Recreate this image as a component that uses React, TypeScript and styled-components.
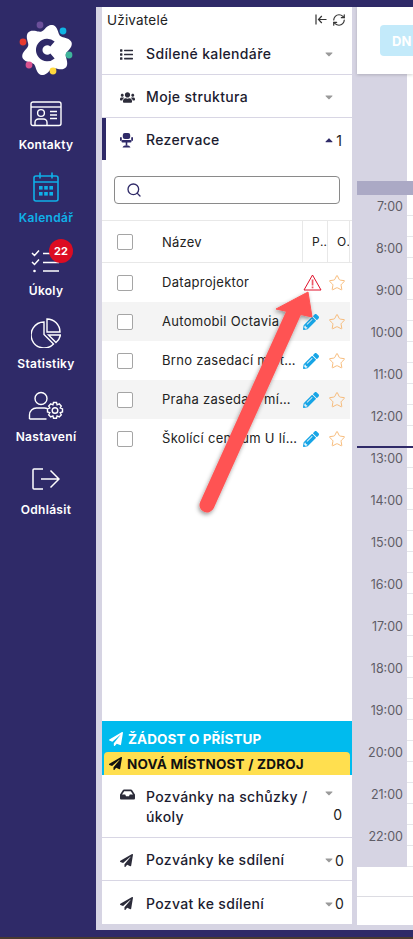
import React from "react";
import styled, { createGlobalStyle } from "styled-components";
import { FaList, FaUsers, FaPaperPlane, FaInbox, FaPencilAlt, FaCaretDown, FaCaretUp } from "react-icons/fa";
import { FiSearch } from "react-icons/fi";
import { RefreshCw, Star } from "lucide-react";

const Global = createGlobalStyle`
  html, body { margin: 0; padding: 0; background: #2f2a68; }
  body { font-family: "Inter", "Liberation Sans", sans-serif; color: #1a1a2a; }
  * { box-sizing: border-box; }
`;

const Page = styled.div`
  position: relative;
  width: 413px;
  height: 939px;
  overflow: hidden;
  display: flex;
  flex-direction: column;
  background: #2f2a68;
`;
const Shell = styled.div`
  flex: 1;
  display: flex;
  min-height: 0;
`;
const Rail = styled.nav`
  width: 96px;
  display: flex;
  flex-direction: column;
  align-items: center;
  padding: 20px 4px 0 0;
`;
const LogoBox = styled.div`
  height: 71px;
`;
const RailItem = styled.div<{ $active?: boolean }>`
  position: relative;
  width: 100%;
  height: 73px;
  display: flex;
  flex-direction: column;
  align-items: center;
  color: ${(p) => (p.$active ? "#0fb0e8" : "#fff")};
  font-size: 12px;
  font-weight: 600;
  letter-spacing: 0.3px;
`;
const RailIcon = styled.div`
  height: 46px;
  display: flex;
  align-items: center;
  justify-content: center;
`;
const Badge = styled.span`
  position: absolute;
  top: 2px;
  left: 49px;
  width: 24px;
  height: 24px;
  border-radius: 50%;
  background: #dc0c22;
  color: #fff;
  font-size: 11px;
  font-weight: 700;
  letter-spacing: 0;
  display: flex;
  align-items: center;
  justify-content: center;
`;
const Workspace = styled.div`
  flex: 1;
  display: flex;
  gap: 5px;
  margin-top: 7px;
  padding: 0 0 6px 6px;
  background: #d6d4e3;
  min-width: 0;
`;
const Panel = styled.aside`
  width: 250px;
  background: #fff;
  display: flex;
  flex-direction: column;
`;
const PanelHead = styled.div`
  height: 25px;
  padding: 0 6px 0 5px;
  display: flex;
  align-items: center;
  justify-content: space-between;
  font-size: 13.5px;
  letter-spacing: 0.2px;
  color: #222;
`;
const HeadTools = styled.div`
  display: flex;
  align-items: center;
  gap: 5px;
  color: #333;
`;
const Section = styled.div<{ $active?: boolean; $tall?: boolean }>`
  height: ${(p) => (p.$tall ? "63px" : p.$active ? "42px" : "43px")};
  padding: ${(p) => (p.$tall ? "12px" : "2px")} 10px 0 ${(p) => (p.$active ? "14px" : "18px")};
  display: flex;
  align-items: ${(p) => (p.$tall ? "flex-start" : "center")};
  border-left: ${(p) => (p.$active ? "4px solid #2f2a68" : "none")};
  border-bottom: ${(p) => (p.$active ? "none" : "1px solid #d8d6e4")};
  font-size: 14px;
  font-weight: 500;
  color: #1c1c30;
  &:last-child { border-bottom: none; }
`;
const SectionIcon = styled.span<{ $tint?: string }>`
  width: 26px;
  flex: none;
  display: flex;
  align-items: center;
  color: ${(p) => p.$tint || "#2c2c3a"};
`;
const SectionLabel = styled.span`
  flex: 1;
  line-height: 20px;
  letter-spacing: 0.35px;
`;
const SectionEnd = styled.span<{ $stack?: boolean }>`
  width: 20px;
  height: ${(p) => (p.$stack ? "36px" : "auto")};
  display: flex;
  flex-direction: ${(p) => (p.$stack ? "column" : "row")};
  align-items: ${(p) => (p.$stack ? "stretch" : "center")};
  justify-content: space-between;
  font-size: 14px;
  font-weight: 400;
  color: #222;
`;
const Caret = styled.span<{ $dark?: boolean }>`
  display: flex;
  margin-left: 1px;
  color: ${(p) => (p.$dark ? "#2f2a68" : "#9a9a9a")};
  font-size: 12px;
`;
const Count = styled.span`
  text-align: right;
`;
const SearchWrap = styled.div`
  padding: 16px 12px 16px;
`;
const SearchBox = styled.div`
  height: 28px;
  border: 1px solid #8a8a8a;
  border-radius: 4px;
  padding-left: 11px;
  display: flex;
  align-items: center;
  color: #2f2a68;
`;
const Table = styled.div`
  width: 250px;
  border-top: 1px solid #e8e8e8;
`;
const HeadRow = styled.div`
  height: 42px;
  display: grid;
  grid-template-columns: 50px 151px 25px 22px;
  border-bottom: 1px solid #e8e8e8;
  font-size: 13px;
  letter-spacing: 0.2px;
  color: #222;
`;
const HeadCell = styled.div`
  display: flex;
  align-items: center;
  padding-left: 10px;
  border-right: 1px solid #e8e8e8;
  overflow: hidden;
  white-space: nowrap;
`;
const NarrowCell = styled(HeadCell)`
  padding-left: 9px;
  font-size: 12px;
  & > span { overflow: hidden; text-overflow: ellipsis; }
`;
const CheckCell = styled.div`
  display: flex;
  align-items: center;
  padding-left: 15px;
`;
const Check = styled.span`
  width: 16px;
  height: 16px;
  border: 1px solid #a5a5a5;
  border-radius: 2px;
  background: #fff;
`;
const BodyRow = styled.div<{ $alt?: boolean }>`
  height: 39px;
  width: 248px;
  display: grid;
  grid-template-columns: 50px 151px 25px 22px;
  background: ${(p) => (p.$alt ? "#f4f4f4" : "#fff")};
  font-size: 13px;
  color: #222;
`;
const NameCell = styled.div`
  display: flex;
  align-items: center;
  padding: 0 6px 1px 10px;
  min-width: 0;
  letter-spacing: 0.3px;
  & > span { overflow: hidden; text-overflow: ellipsis; white-space: nowrap; }
`;
const IconCell = styled.div<{ $tint: string }>`
  display: flex;
  align-items: center;
  color: ${(p) => p.$tint};
`;
const Grow = styled.div`
  flex: 1;
`;
const AccessBand = styled.div`
  height: 54px;
  background: #00bbee;
  padding: 0 2px;
  display: flex;
  flex-direction: column;
`;
const AccessTitle = styled.div`
  height: 31px;
  padding: 4px 0 0 5px;
  display: flex;
  align-items: center;
  gap: 5px;
  color: #fff;
  font-size: 13.5px;
  font-weight: 700;
  letter-spacing: 0.1px;
`;
const NewResource = styled.div`
  height: 23px;
  border-radius: 4px 4px 0 0;
  background: #ffdf4f;
  padding-left: 5px;
  display: flex;
  align-items: center;
  gap: 5px;
  color: #111;
  font-size: 13.5px;
  font-weight: 700;
  letter-spacing: 0.2px;
`;
const Calendar = styled.main`
  flex: 1;
  display: flex;
  flex-direction: column;
  min-width: 0;
  margin-bottom: -1px;
`;
const CalTop = styled.div`
  height: 67px;
  background: #fff;
  padding: 18px 0 0 23px;
  box-shadow: 0 1px 3px rgba(0, 0, 0, 0.18);
  position: relative;
`;
const DayButton = styled.div`
  width: 60px;
  height: 31px;
  border-radius: 4px;
  background: #c3eafa;
  color: #fff;
  font-size: 13px;
  font-weight: 700;
  padding-left: 12px;
  display: flex;
  align-items: center;
`;
const CalGap = styled.div`
  height: 107px;
  display: flex;
  justify-content: flex-end;
`;
const WhiteEdge = styled.div`
  width: 6px;
  background: #fff;
`;
const DayBar = styled.div`
  height: 14px;
  background: #aba9c5;
`;
const Hours = styled.div`
  position: relative;
`;
const HourRow = styled.div`
  height: 42px;
  display: grid;
  grid-template-columns: 50px 6px;
`;
const HourLabel = styled.div`
  background: #d6d4e3;
  padding: 1px 4px 0 0;
  text-align: right;
  font-size: 12.5px;
  line-height: 21px;
  color: #5f5d66;
`;
const HourCell = styled.div`
  background: #fff;
  border-bottom: 1px solid #e6e6ea;
  background-image: linear-gradient(#e6e6ea, #e6e6ea);
  background-size: 100% 1px;
  background-position: 0 20px;
  background-repeat: no-repeat;
`;
const NowLine = styled.div`
  position: absolute;
  left: 0;
  right: 0;
  top: 251px;
  height: 2px;
  background: #2f2a68;
`;
const CalFoot = styled.div`
  flex: 1;
  background: #fff;
`;
const FootRow = styled.div`
  height: 30px;
  border-bottom: 1px solid #dcdce2;
`;
const DarkStrip = styled.div`
  height: 7px;
  background: #2f2a68;
`;
const BottomStrip = styled.div`
  height: 2px;
  background: #4a3a30;
`;
const Arrow = styled.svg`
  position: absolute;
  left: 190px;
  top: 280px;
  pointer-events: none;
`;

// blob with six lobes, the dots sit in the valleys between them
const blobPath = Array.from({ length: 120 }, (_, i) => {
  const t = (i / 120) * Math.PI * 2;
  const r = 22.5 - 3.2 * Math.cos(6 * (t - (13 * Math.PI) / 180));
  const x = 30 + r * Math.cos(t);
  const y = 30 + r * Math.sin(t);
  return `${i === 0 ? "M" : "L"}${x.toFixed(2)} ${y.toFixed(2)}`;
}).join(" ") + "z";

const Logo = () => (
  <svg width="58" height="58" viewBox="0 0 58 58">
    <path d={blobPath} fill="#fff" />
    <circle cx="23" cy="5" r="3.4" fill="#6b4f9a" />
    <circle cx="46" cy="11" r="3.4" fill="#10b4e4" />
    <circle cx="52" cy="35" r="3.4" fill="#3fb59b" />
    <circle cx="36" cy="51" r="3.4" fill="#ffd83d" />
    <circle cx="12" cy="45" r="3.4" fill="#d9528f" />
    <circle cx="6" cy="22" r="3.4" fill="#e5392f" />
    <path d="M35.500 24a8 8 0 1 0 0 12" fill="none" stroke="#2f2a68" strokeWidth="6.500" />
  </svg>
);

const IconContact = () => (
  <svg width="32" height="26" viewBox="0 0 32 26" fill="none" stroke="currentColor" strokeWidth="1.4">
    <rect x="1" y="1" width="30" height="23.500" rx="2" />
    <path d="M1 6h30" />
    <circle cx="11" cy="12" r="3.400" />
    <path d="M5 24v-2.500a3.500 3.500 0 0 1 3.500-3.500h5a3.500 3.500 0 0 1 3.500 3.500V24" />
    <path d="M20 10.500h7M20 14h7M20 17.500h7" />
  </svg>
);
const IconCalendar = () => (
  <svg width="26" height="30" viewBox="0 0 26 30" fill="none" stroke="currentColor" strokeWidth="1.6">
    <rect x="1" y="4" width="24" height="25" rx="2" />
    <path d="M1 10h24M7 0.500v6M19 0.500v6" />
    <g fill="currentColor" stroke="none">
      <rect x="6" y="14" width="3.600" height="3.600" />
      <rect x="11.200" y="14" width="3.600" height="3.600" />
      <rect x="16.400" y="14" width="3.600" height="3.600" />
      <rect x="6" y="20" width="3.600" height="3.600" />
      <rect x="11.200" y="20" width="3.600" height="3.600" />
      <rect x="16.400" y="20" width="3.600" height="3.600" />
    </g>
  </svg>
);
const IconTasks = () => (
  <svg width="30" height="26" viewBox="0 0 30 26" fill="none" stroke="currentColor" strokeWidth="1.5">
    <path d="M1 6l2.500 2.500L8 3.500M1 15l2.500 2.500L8 12.500" />
    <path d="M12 6.500h16M12 15.500h16M12 24h16" />
    <circle cx="3.500" cy="24" r="1.300" fill="currentColor" stroke="none" />
  </svg>
);
const IconPie = () => (
  <svg width="30" height="30" viewBox="0 0 30 30" fill="none" stroke="currentColor" strokeWidth="1.4">
    <path d="M13 4a13 13 0 1 0 9.500 22L13 16.500z" />
    <path d="M16 1a13 13 0 0 1 13 13H16z" />
    <path d="M17.500 17H29.500a13 13 0 0 1-4.500 7.500z" />
  </svg>
);
const IconSettings = () => (
  <svg width="36" height="30" viewBox="0 0 36 30" fill="none" stroke="currentColor" strokeWidth="1.4">
    <circle cx="13" cy="7.500" r="6" />
    <path d="M1.500 28v-4a7 7 0 0 1 7-7h8a7 7 0 0 1 3 .7M1.500 28h17" />
    <circle cx="27" cy="19.500" r="2.800" />
    <path d="M25.500 11.500h3l.6 2.300 2.200-.9 2 2.100-1.100 2 2.300.9v3l-2.300.8 1.100 2.100-2 2.100-2.200-1-.6 2.300h-3l-.6-2.300-2.200 1-2-2.100 1.100-2.100-2.300-.8v-3l2.300-.9-1.100-2 2-2.100 2.200.9z" />
  </svg>
);
const IconLogout = () => (
  <svg width="28" height="22" viewBox="0 0 28 22" fill="none" stroke="currentColor" strokeWidth="1.5">
    <path d="M11 1H2a1 1 0 0 0-1 1v18a1 1 0 0 0 1 1h9" />
    <path d="M9 11h18M18.500 2.500L27 11l-8.500 8.500" />
  </svg>
);
const IconChair = () => (
  <svg width="13" height="15" viewBox="0 0 13 15" fill="currentColor">
    <rect x="2.800" y="0" width="7.400" height="6" rx="2" />
    <rect x="0" y="4" width="1.800" height="4" rx="0.900" />
    <rect x="11.200" y="4" width="1.800" height="4" rx="0.900" />
    <rect x="1.500" y="7" width="10" height="2.400" rx="1" />
    <rect x="5.700" y="9" width="1.600" height="3.500" />
    <path d="M2.500 14.500c.6-1.600 2-2.300 4-2.300s3.400.7 4 2.300z" />
  </svg>
);
const IconCollapse = () => (
  <svg width="12" height="11" viewBox="0 0 12 11" fill="none" stroke="#333" strokeWidth="1.2">
    <path d="M1 0.500v10M11.500 5.500H3.500M6.800 2l-3.300 3.500L6.800 9" />
  </svg>
);
const IconWarn = () => (
  <svg width="19" height="17" viewBox="0 0 19 17">
    <path d="M9.500 1L18 16H1z" fill="#fff" stroke="#e0102a" strokeWidth="1" strokeLinejoin="round" />
    <rect x="8.700" y="5.500" width="1.700" height="6" fill="#ee5a6a" />
    <rect x="8.700" y="12.500" width="1.700" height="1.800" fill="#ee5a6a" />
  </svg>
);

const navItems = [
  { label: "Kontakty", icon: <IconContact /> },
  { label: "Kalendář", icon: <IconCalendar />, active: true },
  { label: "Úkoly", icon: <IconTasks />, badge: 22 },
  { label: "Statistiky", icon: <IconPie /> },
  { label: "Nastavení", icon: <IconSettings /> },
  { label: "Odhlásit", icon: <IconLogout /> },
];

const resources = [
  { name: "Dataprojektor", warn: true },
  { name: "Automobil Octavia" },
  { name: "Brno zasedací místnost" },
  { name: "Praha zasedací místnost" },
  { name: "Školící centrum U lípy" },
];

const hours = Array.from({ length: 16 }, (_, i) => `${i + 7}:00`);

export default function App() {
  return (
    <Page>
      <Global />
      <Shell>
        <Rail>
          <LogoBox>
            <Logo />
          </LogoBox>
          {navItems.map((item) => (
            <RailItem key={item.label} $active={item.active}>
              <RailIcon>{item.icon}</RailIcon>
              {item.badge && <Badge>{item.badge}</Badge>}
              <span>{item.label}</span>
            </RailItem>
          ))}
        </Rail>
        <Workspace>
          <Panel>
            <PanelHead>
              <span>Uživatelé</span>
              <HeadTools>
                <IconCollapse />
                <RefreshCw size={14} strokeWidth={2} />
              </HeadTools>
            </PanelHead>
            <Section>
              <SectionIcon><FaList size={13} /></SectionIcon>
              <SectionLabel>Sdílené kalendáře</SectionLabel>
              <SectionEnd><Caret><FaCaretDown /></Caret></SectionEnd>
            </Section>
            <Section>
              <SectionIcon><FaUsers size={15} /></SectionIcon>
              <SectionLabel>Moje struktura</SectionLabel>
              <SectionEnd><Caret><FaCaretDown /></Caret></SectionEnd>
            </Section>
            <Section $active>
              <SectionIcon $tint="#2f2a68"><IconChair /></SectionIcon>
              <SectionLabel>Rezervace</SectionLabel>
              <SectionEnd><Caret $dark><FaCaretUp /></Caret><Count>1</Count></SectionEnd>
            </Section>
            <SearchWrap>
              <SearchBox><FiSearch size={16} /></SearchBox>
            </SearchWrap>
            <Table>
              <HeadRow>
                <CheckCell><Check /></CheckCell>
                <HeadCell>Název</HeadCell>
                <NarrowCell><span>Práva</span></NarrowCell>
                <NarrowCell><span>Oblíbené</span></NarrowCell>
              </HeadRow>
              {resources.map((r, i) => (
                <BodyRow key={r.name} $alt={i % 2 === 1}>
                  <CheckCell><Check /></CheckCell>
                  <NameCell><span>{r.name}</span></NameCell>
                  {r.warn ? (
                    <IconCell $tint="#e0102a"><IconWarn /></IconCell>
                  ) : (
                    <IconCell $tint="#17a5e6"><FaPencilAlt size={16} /></IconCell>
                  )}
                  <IconCell $tint="#f6b46d"><Star size={18} strokeWidth={1.2} /></IconCell>
                </BodyRow>
              ))}
            </Table>
            <Grow />
            <AccessBand>
              <AccessTitle><FaPaperPlane size={14} />ŽÁDOST O PŘÍSTUP</AccessTitle>
              <NewResource><FaPaperPlane size={13} />NOVÁ MÍSTNOST / ZDROJ</NewResource>
            </AccessBand>
            <Section $tall>
              <SectionIcon><FaInbox size={15} /></SectionIcon>
              <SectionLabel>Pozvánky na schůzky / úkoly</SectionLabel>
              <SectionEnd $stack>
                <Caret><FaCaretDown /></Caret>
                <Count>0</Count>
              </SectionEnd>
            </Section>
            <Section>
              <SectionIcon><FaPaperPlane size={13} /></SectionIcon>
              <SectionLabel>Pozvánky ke sdílení</SectionLabel>
              <SectionEnd><Caret><FaCaretDown /></Caret><Count>0</Count></SectionEnd>
            </Section>
            <Section>
              <SectionIcon><FaPaperPlane size={13} /></SectionIcon>
              <SectionLabel>Pozvat ke sdílení</SectionLabel>
              <SectionEnd><Caret><FaCaretDown /></Caret><Count>0</Count></SectionEnd>
            </Section>
          </Panel>
          <Calendar>
            <CalTop><DayButton>DN</DayButton></CalTop>
            <CalGap><WhiteEdge /></CalGap>
            <DayBar />
            <Hours>
              {hours.map((h) => (
                <HourRow key={h}>
                  <HourLabel>{h}</HourLabel>
                  <HourCell />
                </HourRow>
              ))}
              <NowLine />
            </Hours>
            <CalFoot>
              <FootRow />
            </CalFoot>
          </Calendar>
        </Workspace>
      </Shell>
      <DarkStrip />
      <BottomStrip />
      <Arrow width="140" height="240" viewBox="0 0 140 240">
        <defs>
          <filter id="arrowShadow" x="-20%" y="-20%" width="140%" height="140%">
            <feDropShadow dx="-1" dy="2" stdDeviation="2" floodColor="#000" floodOpacity="0.4" />
          </filter>
        </defs>
        <g filter="url(#arrowShadow)">
          <path d="M17 225L104 32" stroke="#ff5353" strokeWidth="15" strokeLinecap="round" />
          <path d="M118 12L86 29L122 37z" fill="#ff5353" stroke="#ff5353" strokeWidth="1" strokeLinejoin="round" />
        </g>
      </Arrow>
    </Page>
  );
}
